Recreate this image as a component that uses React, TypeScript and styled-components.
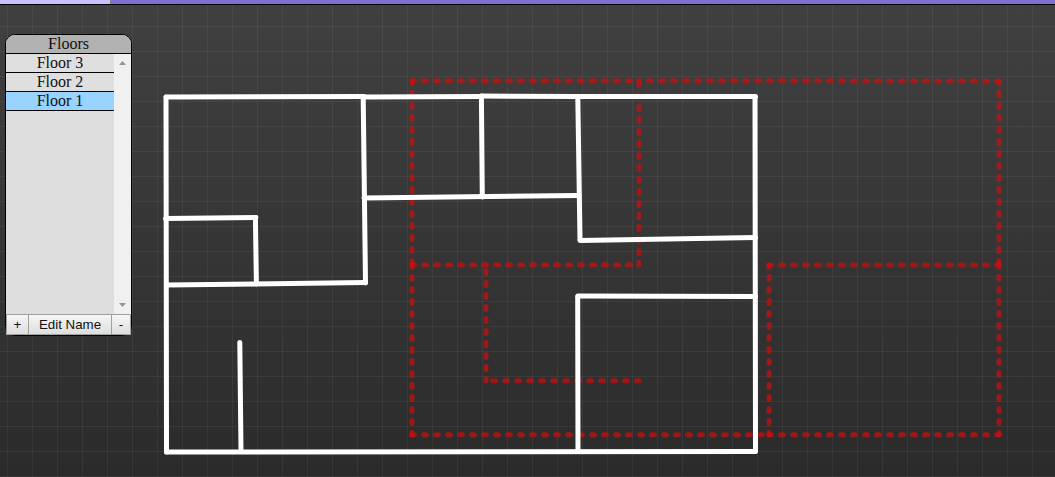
import React, { useState } from "react";
import styled, { createGlobalStyle } from "styled-components";

const GlobalStyle = createGlobalStyle`
  *, *::before, *::after { box-sizing: border-box; }
  html, body, #root { height: 100%; }
  body {
    margin: 0;
    overflow: hidden;
    background: #2b2b2b;
    font-family: "Liberation Serif", "Times New Roman", serif;
  }
`;

const Page = styled.div`
  display: flex;
  flex-direction: column;
  height: 100%;
`;

const ProgressBar = styled.progress`
  appearance: none;
  display: block;
  flex: none;
  width: 100%;
  height: 5px;
  border: 0;
  border-bottom: 1px solid #000;
  background: #7f6fd3;

  &::-webkit-progress-bar { background: #7f6fd3; }
  &::-webkit-progress-value {
    background: #cdc0ff;
    border-right: 1px solid #808080;
  }
`;

const Workspace = styled.main`
  position: relative;
  flex: 1;
  min-height: 0;
  padding: 29px 5px;
  background-image:
    linear-gradient(90deg, rgba(255, 255, 255, 0.05) 1px, transparent 1px),
    linear-gradient(rgba(255, 255, 255, 0.05) 1px, transparent 1px),
    linear-gradient(#404040, #2b2b2b);
  background-size: 25px 25px, 25px 25px, 100% 100%;
  background-position: 7px 0, 0 21px, 0 0;
`;

const Plan = styled.svg`
  position: absolute;
  top: 0;
  left: 0;
  width: 100%;
  height: 100%;
`;

const FloorPanel = styled.section`
  position: relative;
  display: flex;
  flex-direction: column;
  width: 127px;
  border: 1px solid #000;
  border-radius: 10px;
  background: #dedede;
`;

const PanelTitle = styled.h2`
  margin: 0;
  height: 19px;
  border-bottom: 1px solid #000;
  border-radius: 9px 9px 0 0;
  background: #b2b2b2;
  color: #111;
  font-size: 16px;
  font-weight: 400;
  line-height: 18px;
  text-align: center;
`;

const ListArea = styled.div`
  display: flex;
  height: 260px;
`;

const FloorList = styled.div`
  flex: 1;
`;

const FloorItem = styled.button<{ $active: boolean }>`
  display: block;
  width: 100%;
  height: 19px;
  padding: 0;
  border: 0;
  border-bottom: 1px solid #000;
  background: ${(p) => (p.$active ? "#99d3ff" : "#dfdfdf")};
  color: #111;
  font-family: inherit;
  font-size: 16px;
  line-height: 18px;
  text-align: center;
`;

const ScrollTrack = styled.div`
  display: flex;
  flex-direction: column;
  justify-content: space-between;
  align-items: center;
  width: 17px;
  padding: 7px 0;
  background: #f0f0f0;
`;

const Arrow = styled.svg`
  display: block;
  width: 7px;
  height: 4px;
  fill: #959595;
`;

const Actions = styled.div`
  display: flex;
  height: 21px;
`;

const ActionButton = styled.button<{ $width?: number }>`
  flex: ${(p) => (p.$width ? `0 0 ${p.$width}px` : "1")};
  height: 21px;
  padding: 0;
  border: 1px solid #a0a0a0;
  margin-left: -1px;
  background: linear-gradient(#f6f6f6, #dedede);
  color: #111;
  font-family: "Liberation Sans", Arial, sans-serif;
  line-height: 19px;
  text-align: center;

  &:first-child { margin-left: 0; }
`;

/* Segments as [x1, y1, x2, y2]; dashes are phased from the first point. */
type Segment = [number, number, number, number];

const walls: Segment[] = [
  [166, 97, 364, 96.5],
  [364, 97, 481.5, 96.5],
  [481.5, 96, 578, 96.5],
  [578, 96.5, 755.5, 96.5],
  [166, 97, 166.5, 452],
  [166.5, 452, 755.5, 451.5],
  [755, 97, 755.5, 451.5],
  [363.2, 97, 365.5, 283],
  [165.5, 218.6, 256, 217.5],
  [255.4, 217.5, 256.4, 284],
  [166.5, 285, 365.5, 282.6],
  [364, 198, 579, 195.5],
  [481.4, 96, 482.3, 197],
  [577.8, 97, 580, 240],
  [580, 240.4, 755.5, 237.6],
  [578, 296, 755.5, 296.5],
  [577.7, 296.5, 578, 451],
  [239.8, 342.5, 241, 451],
];

const lowerWalls: Segment[] = [
  [412, 80.7, 639, 80.7],
  [999, 81, 639, 80.7],
  [412, 81, 412, 265],
  [412, 265, 412, 435],
  [639, 265, 639, 81],
  [999, 81, 999, 265],
  [999, 265, 999, 435],
  [412, 264.8, 639, 264.8],
  [769, 265, 999, 265],
  [769, 265, 769, 435],
  [412, 434.7, 769, 434.7],
  [769, 434.8, 999, 434.8],
  [486, 381, 486, 265],
  [639, 380.7, 486, 380.7],
];

const toPath = ([x1, y1, x2, y2]: Segment) => `M${x1} ${y1}L${x2} ${y2}`;

const floors = ["Floor 3", "Floor 2", "Floor 1"];

export default function App() {
  const [active, setActive] = useState("Floor 1");

  return (
    <>
      <GlobalStyle />
      <Page>
        <ProgressBar aria-label="Progress" value={111} max={1055} />
        <Workspace>
          <Plan role="img" aria-label="Floor plan">
            <g transform="translate(0 -5)" fill="none" strokeWidth="5" strokeLinecap="round">
              <g stroke="#cc1010" strokeOpacity="0.7" strokeDasharray="2.8 9.2" strokeDashoffset="0.4">
                {lowerWalls.map((s) => <path key={toPath(s)} d={toPath(s)} />)}
              </g>
              <g stroke="#fff">
                {walls.map((s) => <path key={toPath(s)} d={toPath(s)} />)}
              </g>
            </g>
          </Plan>
          <FloorPanel>
            <PanelTitle>Floors</PanelTitle>
            <ListArea>
              <FloorList>
                {floors.map((name) => (
                  <FloorItem
                    key={name}
                    $active={name === active}
                    aria-pressed={name === active}
                    onClick={() => setActive(name)}
                  >
                    {name}
                  </FloorItem>
                ))}
              </FloorList>
              <ScrollTrack aria-hidden="true">
                <Arrow viewBox="0 0 7 4"><path d="M0 4L3.5 0L7 4Z" /></Arrow>
                <Arrow viewBox="0 0 7 4"><path d="M0 0L3.5 4L7 0Z" /></Arrow>
              </ScrollTrack>
            </ListArea>
            <Actions>
              <ActionButton $width={23} aria-label="Add floor">+</ActionButton>
              <ActionButton>Edit Name</ActionButton>
              <ActionButton $width={20} aria-label="Remove floor">-</ActionButton>
            </Actions>
          </FloorPanel>
        </Workspace>
      </Page>
    </>
  );
}
